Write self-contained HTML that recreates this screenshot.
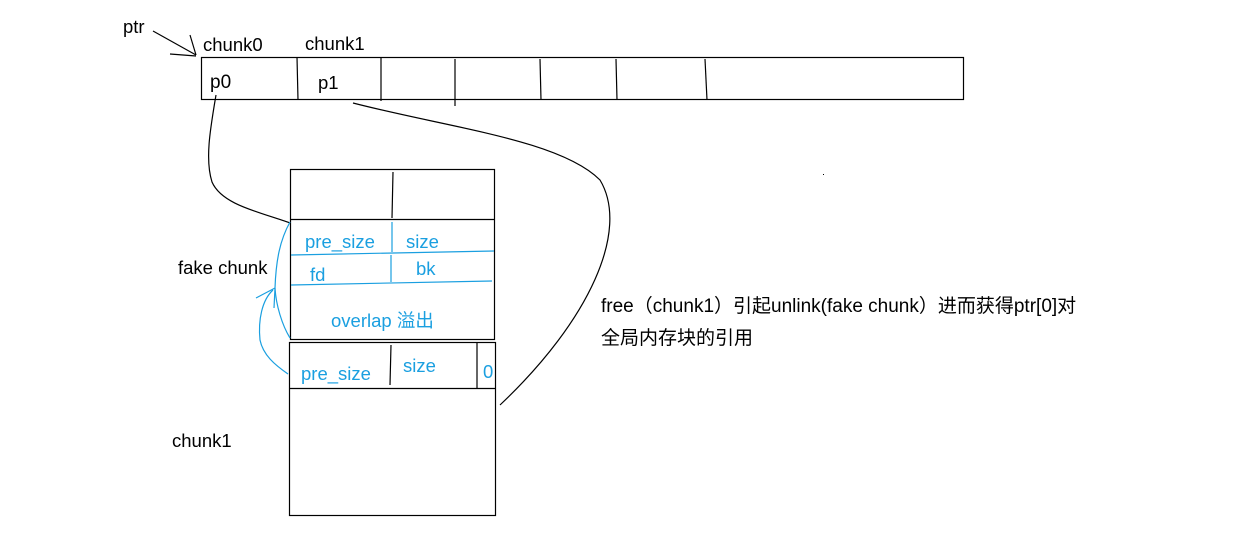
<!DOCTYPE html>
<html><head><meta charset="utf-8"><style>
html,body{margin:0;padding:0;background:#fff;width:1252px;height:540px;overflow:hidden}
svg{display:block}
text{font-family:"Liberation Sans","Noto Sans CJK SC",sans-serif;font-size:18.5px}
.b{fill:#1a9fe0}
</style></head><body>
<svg width="1252" height="540" viewBox="0 0 1252 540">
<g fill="none" stroke="#000" stroke-width="1.2">
<line x1="153" y1="31" x2="196" y2="55"/>
<line x1="190" y1="35" x2="196" y2="55"/>
<line x1="170" y1="54" x2="196" y2="56"/>
<rect x="201.5" y="57.5" width="762" height="42"/>
<line x1="297" y1="57" x2="298" y2="100"/>
<line x1="381" y1="57" x2="381" y2="101"/>
<line x1="455" y1="59" x2="455" y2="106"/>
<line x1="540" y1="59" x2="541" y2="100"/>
<line x1="616" y1="59" x2="617" y2="100"/>
<line x1="705" y1="59" x2="707" y2="100"/>
<path d="M216 95 C210 130 205 160 212 182 C222 205 260 212 290 223"/>
<path d="M353 103 C450 128 560 140 600 180 C630 230 590 320 500 405"/>
<rect x="290.5" y="169.5" width="204" height="170"/>
<line x1="393" y1="172" x2="392" y2="218"/>
<line x1="290" y1="219.5" x2="495" y2="219.5"/>
<rect x="289.5" y="342.5" width="206" height="173"/>
<line x1="391" y1="345" x2="390" y2="385"/>
<line x1="477" y1="343" x2="477" y2="388"/>
<line x1="290" y1="388.5" x2="496" y2="388.5"/>
</g>
<rect x="823" y="174" width="1" height="1" fill="#000"/>
<g fill="none" stroke="#1a9fe0" stroke-width="1.2">
<line x1="291" y1="255" x2="494" y2="251"/>
<line x1="291" y1="285" x2="492" y2="281"/>
<line x1="392" y1="222" x2="392" y2="252"/>
<line x1="391" y1="255" x2="391" y2="282"/>
<path d="M290 222 C280 240 276 260 275 288 C276 305 282 325 290 338"/>
<path d="M275 288 L256 298"/>
<path d="M275 288 L274 308"/>
<path d="M273 290 C262 300 258 320 260 340 C263 355 275 365 288 374"/>
</g>
<g fill="#000">
<text x="123" y="33">ptr</text>
<text x="203" y="51">chunk0</text>
<text x="305" y="50">chunk1</text>
<text x="210" y="88" style="font-size:19px">p0</text>
<text x="318" y="89">p1</text>
<text x="178" y="274">fake chunk</text>
<text x="172" y="447">chunk1</text>
<text x="601" y="312" style="font-size:19px">free（chunk1）引起unlink(fake chunk）进而获得ptr[0]对</text>
<text x="601" y="344" style="font-size:19px">全局内存块的引用</text>
</g>
<g class="b">
<text x="305" y="248">pre_size</text>
<text x="406" y="248">size</text>
<text x="310" y="281">fd</text>
<text x="416" y="275">bk</text>
<text x="331" y="327">overlap 溢出</text>
<text x="301" y="380">pre_size</text>
<text x="403" y="372">size</text>
<text x="483" y="378">0</text>
</g>
</svg>
</body></html>
